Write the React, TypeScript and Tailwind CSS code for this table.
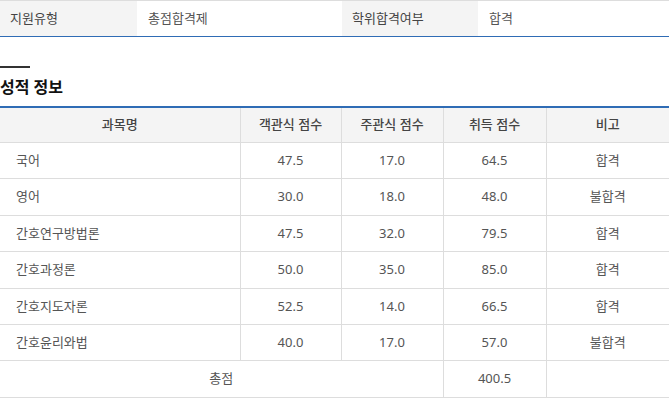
import React from 'react';

type Row = { name: string; obj: string; subj: string; total: string; note: string };

const rows: Row[] = [
  { name: '국어', obj: '47.5', subj: '17.0', total: '64.5', note: '합격' },
  { name: '영어', obj: '30.0', subj: '18.0', total: '48.0', note: '불합격' },
  { name: '간호연구방법론', obj: '47.5', subj: '32.0', total: '79.5', note: '합격' },
  { name: '간호과정론', obj: '50.0', subj: '35.0', total: '85.0', note: '합격' },
  { name: '간호지도자론', obj: '52.5', subj: '14.0', total: '66.5', note: '합격' },
  { name: '간호윤리와법', obj: '40.0', subj: '17.0', total: '57.0', note: '불합격' },
];

const headers = ['과목명', '객관식 점수', '주관식 점수', '취득 점수', '비고'];

export default function App() {
  return (
    <div className="w-[669px] h-[399px] overflow-hidden bg-white text-[13px] text-[#555] font-['Noto_Sans','Noto_Sans_CJK_KR',sans-serif]">
      {/* 지원 정보 */}
      <div className="flex h-[37px] border-t border-[#ddd] border-b border-b-[#2f6cb5]">
        <div className="w-[137px] bg-[#f4f4f4] flex items-center pl-[10px] text-[#444]">지원유형</div>
        <div className="w-[205px] flex items-center pl-[11px]">총점합격제</div>
        <div className="w-[136px] bg-[#f4f4f4] flex items-center pl-[10px] text-[#444]">학위합격여부</div>
        <div className="flex-1 flex items-center pl-[11px]">합격</div>
      </div>

      <div className="mt-[29px] h-[2px] w-[30px] bg-[#333]" />
      <h2 className="mt-[7px] mb-[7px] h-[24px] leading-[24px] text-[16px] font-bold text-[#111]">성적 정보</h2>

      <table className="w-full table-fixed border-collapse border-t-2 border-t-[#2f6cb5]">
        <colgroup>
          <col className="w-[240px]" />
          <col className="w-[101px]" />
          <col className="w-[102px]" />
          <col className="w-[103px]" />
          <col />
        </colgroup>
        <thead>
          <tr className="h-[35.5px] bg-[#f4f4f4]">
            {headers.map((h, i) => (
              <th
                key={h}
                className={`border-b border-[#ddd] font-medium text-[#444] text-center ${i > 0 ? 'border-l' : ''}`}
              >
                {h}
              </th>
            ))}
          </tr>
        </thead>
        <tbody>
          {rows.map((r) => (
            <tr key={r.name} className="h-[36.4px]">
              <td className="border-b border-[#ddd] pl-[16px] text-left">{r.name}</td>
              <td className="border-b border-l border-[#ddd] text-center">{r.obj}</td>
              <td className="border-b border-l border-[#ddd] text-center">{r.subj}</td>
              <td className="border-b border-l border-[#ddd] text-center">{r.total}</td>
              <td className="border-b border-l border-[#ddd] text-center">{r.note}</td>
            </tr>
          ))}
          <tr className="h-[36.4px]">
            <td colSpan={3} className="border-b border-[#ddd] text-center">총점</td>
            <td className="border-b border-l border-[#ddd] text-center">400.5</td>
            <td className="border-b border-l border-[#ddd]" />
          </tr>
        </tbody>
      </table>
    </div>
  );
}
